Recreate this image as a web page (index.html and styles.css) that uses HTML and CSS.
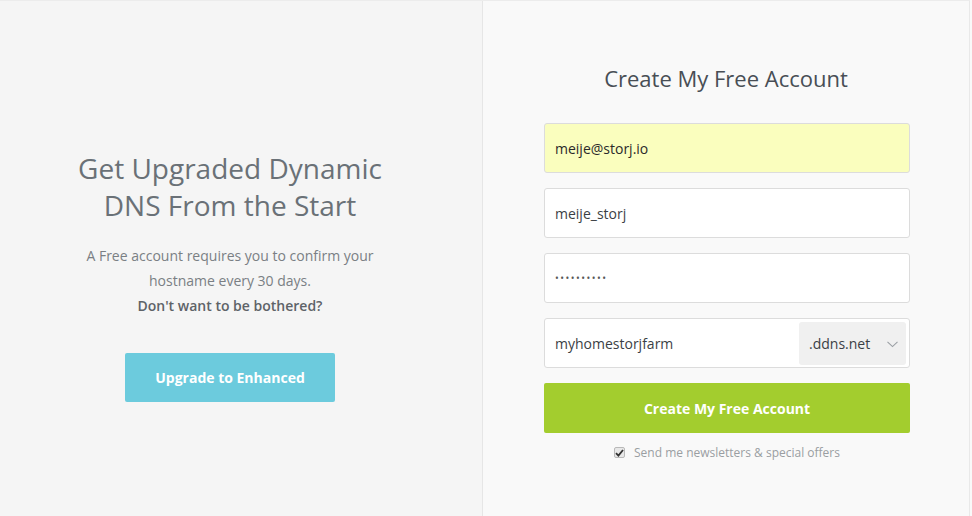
FILE: index.html
```html
<!DOCTYPE html>
<html>
<head>
<meta charset="utf-8">
<link rel="stylesheet" href="styles.css">
</head>
<body>
<div class="page">
  <section class="promo">
    <div class="promo-inner">
      <h2 class="promo-title">Get Upgraded Dynamic DNS From the Start</h2>
      <p class="promo-text">A Free account requires you to confirm your hostname every 30 days.<br><strong>Don't want to be bothered?</strong></p>
      <a class="btn-upgrade" href="#">Upgrade to Enhanced</a>
    </div>
  </section>
  <section class="signup">
    <h1 class="signup-title">Create My Free Account</h1>
    <form class="form">
      <div class="field field-autofill">meije@storj.io</div>
      <div class="field">meije_storj</div>
      <div class="field field-pass">••••••••••</div>
      <div class="field field-host">
        <span class="host-text">myhomestorjfarm</span>
        <span class="domain">.ddns.net
          <svg class="chev" width="11" height="7" viewBox="0 0 11 7"><path d="M0.5 0.8 L5.5 5.6 L10.5 0.8" fill="none" stroke="#9a9fa4" stroke-width="1.1"/></svg>
        </span>
      </div>
      <button class="btn-create" type="button">Create My Free Account</button>
      <label class="newsletter"><span class="check"><svg width="9" height="8" viewBox="0 0 9 8"><path d="M1 4.2 L3.4 6.6 L8 1" fill="none" stroke="#333" stroke-width="1.8"/></svg></span>Send me newsletters &amp; special offers</label>
    </form>
  </section>
</div>
</body>
</html>
```
FILE: styles.css
```css
html, body {
  margin: 0;
  padding: 0;
}
body {
  font-family: "Open Sans", "Liberation Sans", sans-serif;
  background: #f9f9f9;
  width: 972px;
  height: 516px;
  overflow: hidden;
}
.page {
  display: flex;
  height: 515px;
  border-top: 1px solid #ececec;
  margin-right: 2px;
  border-right: 1px solid #e9e9e9;
}
.promo {
  width: 483px;
  flex: none;
  background: #f5f5f5;
  border-right: 1px solid #e6e6e6;
  display: flex;
  justify-content: center;
  padding-right: 22px;
  box-sizing: border-box;
}
.promo-inner {
  width: 320px;
  text-align: center;
  padding-top: 149px;
}
.promo-title {
  margin: 0;
  font-size: 28px;
  line-height: 37px;
  font-weight: 400;
  color: #6a7177;
  padding: 0 4px;
}
.promo-text {
  margin: 19px 0 0;
  font-size: 14px;
  line-height: 25px;
  color: #7a7f84;
}
.promo-text strong {
  font-weight: 600;
  color: #5e6368;
}
.btn-upgrade {
  display: inline-block;
  margin-top: 35px;
  width: 210px;
  height: 49px;
  line-height: 49px;
  background: #6ccbdd;
  color: #fff;
  font-weight: 700;
  font-size: 14px;
  text-decoration: none;
  border-radius: 2px;
}
.signup {
  flex: 1;
  display: flex;
  flex-direction: column;
  align-items: center;
  padding-top: 62px;
}
.signup-title {
  margin: 0;
  font-size: 22px;
  line-height: 30px;
  font-weight: 400;
  color: #484e55;
}
.form {
  width: 366px;
  margin-top: 30px;
  margin-left: 2px;
  display: flex;
  flex-direction: column;
  gap: 15px;
}
.field {
  height: 50px;
  box-sizing: border-box;
  border: 1px solid #dcdcdc;
  border-radius: 3px;
  background: #fff;
  font-size: 14px;
  color: #3b3f45;
  padding-left: 10px;
  display: flex;
  align-items: center;
}
.field-autofill {
  background: #fafebe;
  color: #2a2a2a;
}
.field-pass {
  font-size: 10px;
  letter-spacing: 1.5px;
  color: #555;
}
.field-host {
  justify-content: space-between;
  padding-right: 3px;
}
.domain {
  width: 107px;
  height: 43px;
  box-sizing: border-box;
  background: #f0f0f0;
  border-radius: 3px;
  display: flex;
  align-items: center;
  justify-content: space-between;
  padding: 0 8px 0 10px;
  color: #3b3f45;
}
.chev {
  margin-top: 3px;
}
.btn-create {
  height: 50px;
  border: none;
  border-radius: 2px;
  background: #a3cd2e;
  color: #fff;
  font-family: inherit;
  font-weight: 700;
  font-size: 14px;
  padding: 0;
}
.newsletter {
  margin-top: -4px;
  display: flex;
  justify-content: center;
  align-items: center;
  font-size: 12px;
  color: #9a9ea2;
  gap: 9px;
}
.check {
  width: 11px;
  height: 11px;
  box-sizing: border-box;
  border: 1px solid #b9b9b9;
  border-radius: 2px;
  background: #e8e8e8;
  display: flex;
  align-items: center;
  justify-content: center;
}
```
